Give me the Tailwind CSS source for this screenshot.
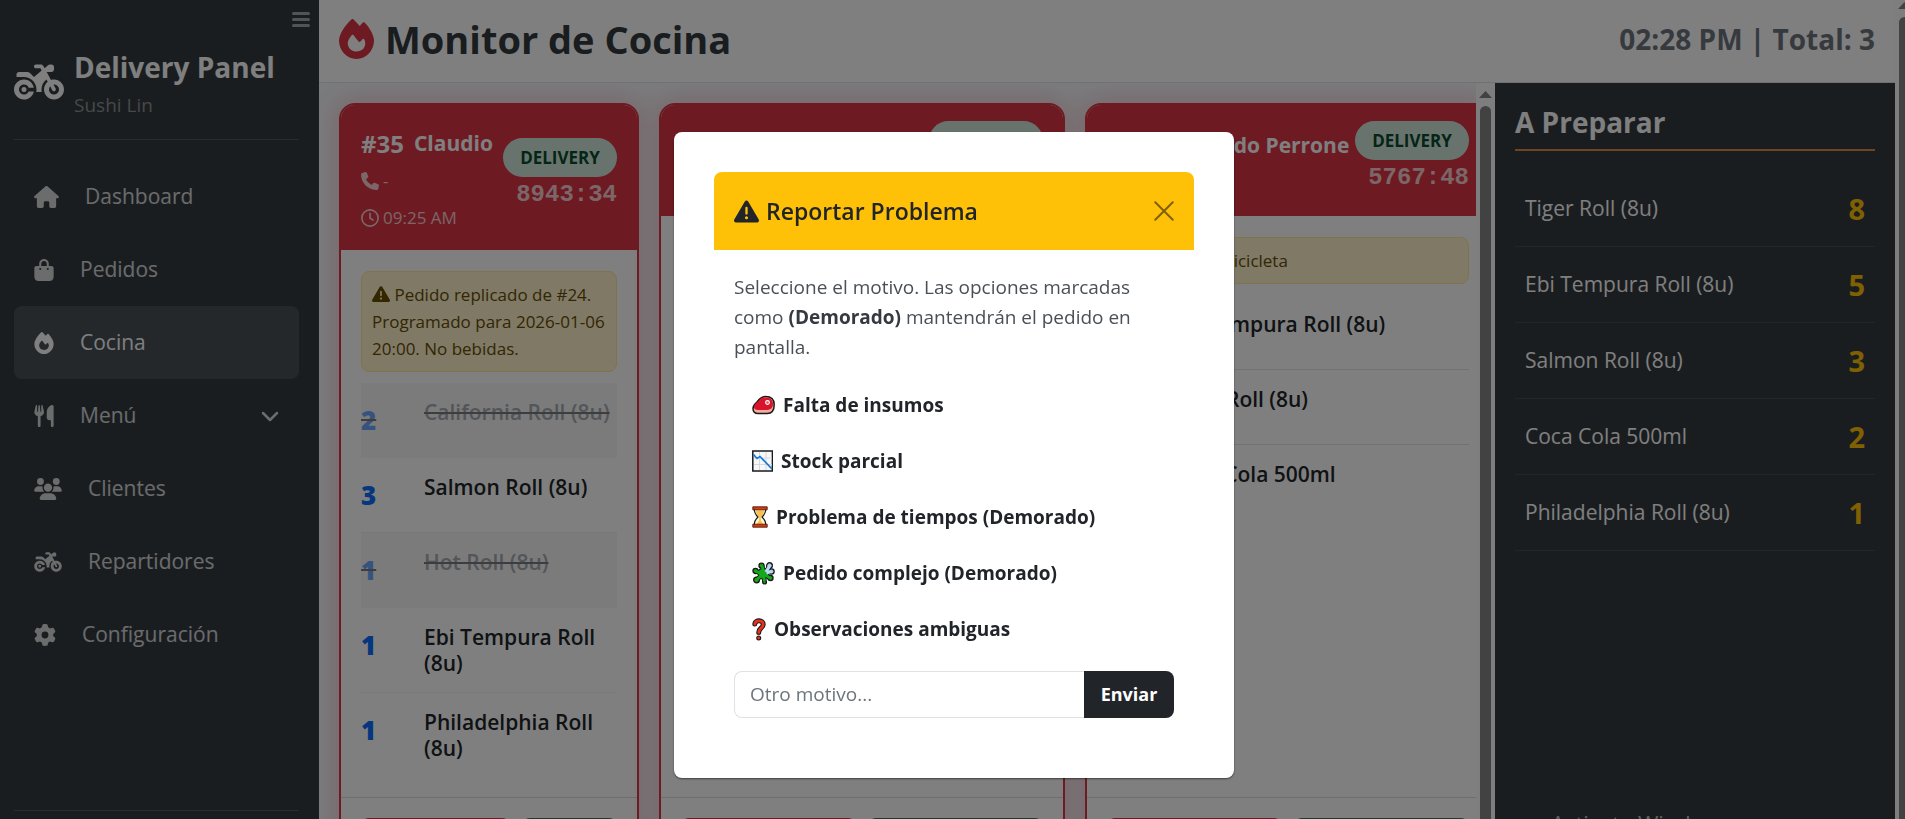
<!DOCTYPE html>
<html lang="es">
<head>
  <meta charset="UTF-8">
  <meta name="viewport" content="width=device-width, initial-scale=1.0">
  <title>Monitor de Cocina</title>
  <script src="https://cdn.jsdelivr.net/npm/@tailwindcss/browser@4"></script>
</head>
<body class="h-screen overflow-hidden bg-[#f5f6fa] font-['Open_Sans',sans-serif] text-[#212529]">

  <!-- Iconos compartidos -->
  <svg class="hidden">
    <symbol id="i-fire" viewBox="0 0 448 512"><path d="M159.3 5.4c7.8-7.3 19.9-7.2 27.7 .1c27.6 25.9 53.5 53.8 77.7 84c11-14.4 23.5-30.1 37-42.9c7.9-7.4 20.1-7.4 28 .1c34.6 33 63.9 76.6 84.5 118c20.3 40.8 33.8 82.5 33.8 111.9C448 404.2 348.2 512 224 512C98.4 512 0 404.1 0 276.5c0-38.4 17.8-85.3 45.4-131.7C73.3 97.7 112.7 48.6 159.3 5.4zM225.7 416c25.3 0 47.7-7 68.8-21c42.1-29.4 53.4-88.2 28.1-134.4c-4.5-9-16-9.6-22.5-2l-25.2 29.3c-6.6 7.6-18.5 7.4-24.7-.5c-16.5-21-46-58.5-62.8-79.8c-6.3-8-18.3-8.1-24.7-.1c-33.8 42.5-50.8 69.3-50.8 99.4C112 375.4 162.6 416 225.7 416z"/></symbol>
    <symbol id="i-moto" viewBox="0 0 640 512"><path d="M280 32c-13.3 0-24 10.7-24 24s10.7 24 24 24h57.7l16.4 30.3L256 192l-45.3-45.3c-12-12-28.3-18.7-45.3-18.7H64c-17.7 0-32 14.3-32 32v32h96c88.4 0 160 71.6 160 160c0 11-1.1 21.7-3.2 32h70.4c-2.1-10.3-3.2-21-3.2-32c0-52.2 25-98.6 63.7-127.8l15.4 28.6C402.4 276.3 384 312 384 352c0 70.7 57.3 128 128 128s128-57.3 128-128s-57.3-128-128-128c-13.5 0-26.5 2.1-38.7 6L418.2 128H480c17.7 0 32-14.3 32-32V64c0-17.7-14.3-32-32-32H459.6c-7.5 0-14.7 2.6-20.5 7.4L391.7 78.9l-14-26c-7-12.9-20.5-21-35.2-21H280zM462.7 311.2l28.2 52.2c6.3 11.7 20.9 16 32.5 9.7s16-20.9 9.7-32.5l-28.2-52.2c2.3-.3 4.7-.4 7.1-.4c35.3 0 64 28.7 64 64s-28.7 64-64 64s-64-28.7-64-64c0-15.5 5.5-29.7 14.7-40.8zM187.3 376c-9.5 23.5-32.5 40-59.3 40c-35.3 0-64-28.7-64-64s28.7-64 64-64c26.9 0 49.9 16.5 59.3 40h66.4C242.5 268.8 190.5 224 128 224C57.3 224 0 281.3 0 352s57.3 128 128 128c62.5 0 114.5-44.8 125.8-104H187.3zM128 384a32 32 0 1 0 0-64 32 32 0 1 0 0 64z"/></symbol>
    <symbol id="i-phone" viewBox="0 0 512 512"><path d="M164.9 24.6c-7.7-18.6-28-28.5-47.4-23.2l-88 24C12.1 30.2 0 46 0 64C0 311.4 200.6 512 448 512c18 0 33.8-12.1 38.6-29.5l24-88c5.3-19.4-4.6-39.7-23.2-47.4l-96-40c-16.3-6.8-35.2-2.1-46.3 11.6L304.7 368C234.3 334.7 177.3 277.7 144 207.3L193.3 167c13.7-11.2 18.4-30 11.6-46.3l-40-96z"/></symbol>
    <symbol id="i-clock" viewBox="0 0 512 512"><g fill="none" stroke="currentColor" stroke-width="48" stroke-linecap="round" stroke-linejoin="round"><circle cx="256" cy="256" r="232"/><path d="M256 120v136l88 60"/></g></symbol>
    <symbol id="i-warn" viewBox="0 0 512 512"><path d="M256 32c14.2 0 27.3 7.5 34.5 19.8l216 368c7.3 12.4 7.3 27.7 .2 40.1S486.3 480 472 480H40c-14.3 0-27.6-7.7-34.7-20.1s-7-27.8 .2-40.1l216-368C228.7 39.5 241.8 32 256 32zm0 128c-13.3 0-24 10.7-24 24V296c0 13.3 10.7 24 24 24s24-10.7 24-24V184c0-13.3-10.7-24-24-24zm32 224a32 32 0 1 0 -64 0 32 32 0 1 0 64 0z"/></symbol>
  </svg>

  <div class="flex h-full">

    <!-- Sidebar -->
    <aside class="relative flex w-[319px] shrink-0 flex-col bg-[#343a40] pr-5 pl-[14px] text-white">
      <button type="button" aria-label="Contraer menú" class="absolute top-[10px] right-2 text-white/55">
        <svg class="h-5 w-5" viewBox="0 0 20 20" fill="none" stroke="currentColor" stroke-width="3" stroke-linecap="round"><path d="M2.5 3.5h15M2.5 9.5h15M2.5 15.5h15"/></svg>
      </button>

      <div class="flex h-[139px] shrink-0 items-center gap-[10px] pt-[24px]">
        <svg class="h-10 w-[50px] shrink-0 fill-current"><use href="#i-moto"/></svg>
        <div class="pt-[6px]">
          <div class="text-[28px] leading-[40px] font-bold whitespace-nowrap">Delivery Panel</div>
          <div class="text-[19px] leading-[36px] text-white/45">Sushi Lin</div>
        </div>
      </div>
      <hr class="border-[#545b61]">

      <nav class="mt-5 flex flex-1 flex-col text-[21px] text-white/80">
        <a href="#" class="flex h-[73px] items-center gap-[26px] rounded-lg px-5">
          <svg class="h-[22px] w-[25px] fill-current" viewBox="0 0 576 512"><path d="M575.8 255.5c0 18-15 32.1-32 32.1h-32l.7 160.2c0 2.7-.2 5.4-.5 8.1V472c0 22.1-17.9 40-40 40H456c-1.1 0-2.2 0-3.3-.1c-1.4 .1-2.8 .1-4.2 .1H416 392c-22.1 0-40-17.9-40-40V448 384c0-17.7-14.3-32-32-32H256c-17.7 0-32 14.3-32 32v64 24c0 22.1-17.9 40-40 40H160 128.1c-1.5 0-3-.1-4.5-.2c-1.2 .1-2.4 .2-3.6 .2H104c-22.1 0-40-17.9-40-40V360c0-.9 0-1.9 .1-2.8V287.6H32c-18 0-32-14-32-32.1c0-9 3-17 10-24L266.4 8c7-7 15-8 22-8s15 2 21 7L564.8 231.5c8 7 12 15 11 24z"/></svg>
          Dashboard
        </a>
        <a href="#" class="flex h-[73px] items-center gap-[26px] rounded-lg px-5">
          <svg class="h-[22px] w-5 fill-current" viewBox="0 0 448 512"><path d="M160 112c0-35.3 28.7-64 64-64s64 28.7 64 64v48H160V112zm-48 48H48c-26.5 0-48 21.5-48 48V416c0 53 43 96 96 96H352c53 0 96-43 96-96V208c0-26.5-21.5-48-48-48H336V112C336 50.1 285.9 0 224 0S112 50.1 112 112v48zm24 48a24 24 0 1 1 0 48 24 24 0 1 1 0-48zm152 24a24 24 0 1 1 48 0 24 24 0 1 1 -48 0z"/></svg>
          Pedidos
        </a>
        <a href="#" class="flex h-[73px] items-center gap-[26px] rounded-lg bg-[#495057] px-5 text-white">
          <svg class="h-[22px] w-5 fill-current"><use href="#i-fire"/></svg>
          Cocina
        </a>
        <a href="#" class="flex h-[73px] items-center gap-[26px] rounded-lg px-5">
          <svg class="h-[22px] w-5 fill-current" viewBox="0 0 448 512"><path d="M416 0C400 0 288 32 288 176V288c0 35.3 28.7 64 64 64h32V480c0 17.7 14.3 32 32 32s32-14.3 32-32V352 240 32c0-17.7-14.3-32-32-32zM64 16C64 7.8 57.9 1 49.7 .1S34.2 4.6 32.4 12.5L2.1 148.8C.7 155.1 0 161.5 0 167.9c0 45.9 35.1 83.6 80 87.7V480c0 17.7 14.3 32 32 32s32-14.3 32-32V255.6c44.9-4.1 80-41.8 80-87.7c0-6.4-.7-12.8-2.1-19.1L191.6 12.5c-1.8-8-9.3-13.3-17.4-12.4S160 7.8 160 16V150.2c0 5.4-4.4 9.8-9.8 9.8c-5.1 0-9.3-3.9-9.8-9L127.9 14.6C127.2 6.3 120.3 0 112 0s-15.2 6.3-15.9 14.6L83.7 151c-.5 5.1-4.7 9-9.8 9c-5.4 0-9.8-4.4-9.8-9.8V16z"/></svg>
          Menú
          <svg class="ml-auto h-[18px] w-[18px]" viewBox="0 0 18 18" fill="none" stroke="currentColor" stroke-width="2.5" stroke-linecap="round" stroke-linejoin="round"><path d="M2 6l7 7 7-7"/></svg>
        </a>
        <a href="#" class="flex h-[73px] items-center gap-[26px] rounded-lg px-5">
          <svg class="h-[22px] w-7 fill-current" viewBox="0 0 640 512"><path d="M144 0a80 80 0 1 1 0 160A80 80 0 1 1 144 0zM512 0a80 80 0 1 1 0 160A80 80 0 1 1 512 0zM0 298.7C0 239.8 47.8 192 106.7 192h42.7c15.9 0 31 3.5 44.6 9.7c-1.3 7.2-1.9 14.7-1.9 22.3c0 38.2 16.8 72.5 43.3 96c-.2 0-.4 0-.7 0H21.3C9.6 320 0 310.4 0 298.7zM405.3 320c-.2 0-.4 0-.7 0c26.6-23.5 43.3-57.8 43.3-96c0-7.6-.7-15-1.9-22.3c13.6-6.3 28.7-9.7 44.6-9.7h42.7C592.2 192 640 239.8 640 298.7c0 11.8-9.6 21.3-21.3 21.3H405.3zM224 224a96 96 0 1 1 192 0 96 96 0 1 1 -192 0zM128 485.3C128 411.7 187.7 352 261.3 352H378.7C452.3 352 512 411.7 512 485.3c0 14.7-11.9 26.7-26.7 26.7H154.7c-14.7 0-26.7-11.9-26.7-26.7z"/></svg>
          Clientes
        </a>
        <a href="#" class="flex h-[73px] items-center gap-[26px] rounded-lg px-5">
          <svg class="h-[22px] w-7 fill-current"><use href="#i-moto"/></svg>
          Repartidores
        </a>
        <a href="#" class="flex h-[73px] items-center gap-[26px] rounded-lg px-5">
          <svg class="h-[22px] w-[22px] fill-current" viewBox="0 0 512 512"><path d="M495.9 166.6c3.2 8.7 .5 18.4-6.4 24.6l-43.3 39.4c1.1 8.3 1.7 16.8 1.7 25.4s-.6 17.1-1.7 25.4l43.3 39.4c6.9 6.2 9.6 15.9 6.4 24.6c-4.4 11.9-9.7 23.3-15.8 34.3l-4.7 8.1c-6.6 11-14 21.4-22.1 31.2c-5.9 7.2-15.7 9.6-24.5 6.8l-55.7-17.7c-13.4 10.3-28.2 18.9-44 25.4l-12.5 57.1c-2 9.1-9 16.3-18.2 17.8c-13.8 2.3-28 3.5-42.5 3.5s-28.7-1.2-42.5-3.5c-9.2-1.5-16.2-8.7-18.2-17.8l-12.5-57.1c-15.8-6.5-30.6-15.1-44-25.4L83.1 425.9c-8.8 2.8-18.6 .3-24.5-6.8c-8.1-9.8-15.5-20.2-22.1-31.2l-4.7-8.1c-6.1-11-11.4-22.4-15.8-34.3c-3.2-8.7-.5-18.4 6.4-24.6l43.3-39.4C64.6 273.1 64 264.6 64 256s.6-17.1 1.7-25.4L22.4 191.2c-6.9-6.2-9.6-15.9-6.4-24.6c4.4-11.9 9.7-23.3 15.8-34.3l4.7-8.1c6.6-11 14-21.4 22.1-31.2c5.9-7.2 15.7-9.6 24.5-6.8l55.7 17.7c13.4-10.3 28.2-18.9 44-25.4l12.5-57.1c2-9.1 9-16.3 18.2-17.8C227.3 1.2 241.5 0 256 0s28.7 1.2 42.5 3.5c9.2 1.5 16.2 8.7 18.2 17.8l12.5 57.1c15.8 6.5 30.6 15.1 44 25.4l55.7-17.7c8.8-2.8 18.6-.3 24.5 6.8c8.1 9.8 15.5 20.2 22.1 31.2l4.7 8.1c6.1 11 11.4 22.4 15.8 34.3zM256 336a80 80 0 1 0 0-160 80 80 0 1 0 0 160z"/></svg>
          Configuración
        </a>
      </nav>
      <hr class="mb-2 border-[#545b61]">
    </aside>

    <main class="flex min-w-0 flex-1 flex-col">
      <header class="flex h-[83px] shrink-0 items-center justify-between border-b border-[#dee2e6] bg-white px-5 pb-1">
        <h1 class="flex items-center gap-[11px] text-[38px] font-bold text-[#343a40]">
          <svg class="h-10 w-[35px] fill-[#dc3545]"><use href="#i-fire"/></svg>
          Monitor de Cocina
        </h1>
        <div class="text-[28px] font-bold text-[#6c757d]">02:28 PM | Total: 3</div>
      </header>

      <div class="flex min-h-0 flex-1">
        <!-- Tarjetas de pedidos -->
        <div class="flex min-w-0 flex-1 gap-5 overflow-hidden pt-5 pl-5">

          <article class="flex h-[800px] w-[300px] shrink-0 flex-col overflow-hidden rounded-2xl border-2 border-[#dc3545] bg-white shadow-[0_0_24px_4px_rgba(220,53,69,0.2)]">
            <div class="flex items-center justify-between bg-[#dc3545] px-5 py-4 text-white">
              <div>
                <div class="flex h-11 items-center gap-[10px] pt-[2px] text-[21px] font-bold"><span class="text-[24px]">#35</span> Claudio</div>
                <div class="mb-[5px] flex h-8 items-center gap-1 text-[17px] text-white/75"><svg class="h-[18px] w-[18px] fill-current"><use href="#i-phone"/></svg> -</div>
                <div class="flex h-8 items-center gap-1 text-[17px] text-white/75"><svg class="h-[18px] w-[18px]"><use href="#i-clock"/></svg> 09:25 AM</div>
              </div>
              <div class="flex flex-col items-end pb-1">
                <span class="flex h-[39px] w-[114px] items-center justify-center rounded-full bg-[#d1e7dd] text-[17px] font-bold text-[#0a4a2c]">DELIVERY</span>
                <span class="font-['Liberation_Mono',monospace] text-2xl leading-[36px] font-bold text-white/75">8943:34</span>
              </div>
            </div>
            <div class="px-5 pt-[21px]">
              <div class="mb-[11px] rounded-lg border border-[#ffe69c] bg-[#fff3cd] px-[10px] py-[9px] text-[17px] leading-[27px] text-[#664d03]">
                <svg class="inline h-[18px] w-[18px] align-[-2px] fill-current"><use href="#i-warn"/></svg> Pedido replicado de #24. Programado para 2026-01-06 20:00. No bebidas.
              </div>
              <ul class="text-[21px] leading-[26px] font-semibold">
                <li class="flex border-b border-[#f1f1f1] bg-[#f1f2f3] py-4 line-through opacity-60"><span class="w-[63px] shrink-0 text-[26px] leading-[42px] font-extrabold text-[#0d6efd]">2</span><span class="text-[#6c757d]">California Roll (8u)</span></li>
                <li class="flex border-b border-[#f1f1f1] py-4"><span class="w-[63px] shrink-0 text-[26px] leading-[42px] font-extrabold text-[#0d6efd]">3</span>Salmon Roll (8u)</li>
                <li class="flex border-b border-[#f1f1f1] bg-[#f1f2f3] py-4 line-through opacity-60"><span class="w-[63px] shrink-0 text-[26px] leading-[42px] font-extrabold text-[#0d6efd]">1</span><span class="text-[#6c757d]">Hot Roll (8u)</span></li>
                <li class="flex border-b border-[#f1f1f1] py-4"><span class="w-[63px] shrink-0 text-[26px] leading-[42px] font-extrabold text-[#0d6efd]">1</span>Ebi Tempura Roll (8u)</li>
                <li class="flex py-4"><span class="w-[63px] shrink-0 text-[26px] leading-[42px] font-extrabold text-[#0d6efd]">1</span>Philadelphia Roll (8u)</li>
              </ul>
            </div>
            <div class="mt-5 flex gap-3 border-t border-[#dcdcdc] p-5">
              <button type="button" class="h-12 w-[149px] rounded-lg bg-[#dc3545] font-bold text-white">Problema</button>
              <button type="button" class="h-12 flex-1 rounded-lg bg-[#198754] font-bold text-white">Listo</button>
            </div>
          </article>

          <article class="flex h-[800px] w-[406px] shrink-0 flex-col overflow-hidden rounded-2xl border-2 border-[#dc3545] bg-white shadow-[0_0_24px_4px_rgba(220,53,69,0.2)]">
            <div class="flex items-center justify-between bg-[#dc3545] px-5 py-4 text-white">
              <div>
                <div class="flex h-11 items-center text-[24px] font-bold">#36</div>
              </div>
              <div class="flex flex-col items-end pb-1">
                <span class="flex h-[39px] w-[114px] items-center justify-center rounded-full bg-[#d1e7dd] text-[17px] font-bold text-[#0a4a2c]">DELIVERY</span>
                <span class="h-[36px]"></span>
              </div>
            </div>
            <div class="h-[561px] shrink-0"></div>
            <div class="mt-5 flex gap-3 border-t border-[#dcdcdc] p-5">
              <button type="button" class="h-12 flex-1 rounded-lg bg-[#dc3545] font-bold text-white">Problema</button>
              <button type="button" class="h-12 flex-1 rounded-lg bg-[#198754] font-bold text-white">Listo</button>
            </div>
          </article>

          <article class="flex h-[800px] w-[406px] shrink-0 flex-col overflow-hidden rounded-2xl border-2 border-[#dc3545] bg-white shadow-[0_0_24px_4px_rgba(220,53,69,0.2)]">
            <div class="flex items-center justify-between bg-[#dc3545] px-5 py-4 text-white">
              <div>
                <div class="flex h-11 items-center gap-[10px] pt-[2px] text-[21px] font-bold whitespace-nowrap"><span class="text-[24px]">#37</span> Fernando Perrone</div>
                <div class="flex h-8 items-center gap-1 text-[17px] text-white/75"><svg class="h-[18px] w-[18px]"><use href="#i-clock"/></svg> 02:20 PM</div>
              </div>
              <div class="flex flex-col items-end pb-1">
                <span class="flex h-[39px] w-[114px] items-center justify-center rounded-full bg-[#d1e7dd] text-[17px] font-bold text-[#0a4a2c]">DELIVERY</span>
                <span class="font-['Liberation_Mono',monospace] text-2xl leading-[36px] font-bold text-white/75">5767:48</span>
              </div>
            </div>
            <div class="h-[561px] shrink-0 px-5 pt-[21px]">
              <div class="mb-[11px] rounded-lg border border-[#ffe69c] bg-[#fff3cd] px-[10px] py-[9px] text-[17px] leading-[27px] text-[#664d03]">
                <svg class="inline h-[18px] w-[18px] align-[-2px] fill-current"><use href="#i-warn"/></svg> Buscar en bicicleta
              </div>
              <ul class="text-[21px] leading-[26px] font-semibold">
                <li class="flex border-b border-[#e4e4e4] py-4"><span class="w-[63px] shrink-0 text-[26px] leading-[42px] font-extrabold text-[#0d6efd]">4</span>Ebi Tempura Roll (8u)</li>
                <li class="flex border-b border-[#e4e4e4] py-4"><span class="w-[63px] shrink-0 text-[26px] leading-[42px] font-extrabold text-[#0d6efd]">8</span>Tiger Roll (8u)</li>
                <li class="flex py-4"><span class="w-[63px] shrink-0 text-[26px] leading-[42px] font-extrabold text-[#0d6efd]">2</span>Coca Cola 500ml</li>
              </ul>
            </div>
            <div class="mt-5 flex gap-3 border-t border-[#dcdcdc] p-5">
              <button type="button" class="h-12 flex-1 rounded-lg bg-[#dc3545] font-bold text-white">Problema</button>
              <button type="button" class="h-12 flex-1 rounded-lg bg-[#198754] font-bold text-white">Listo</button>
            </div>
          </article>
        </div>

        <!-- Barra de scroll de las tarjetas -->
        <div class="flex w-[19px] shrink-0 flex-col items-center gap-2 bg-[#fcfcfc] pt-2">
          <svg class="h-[7px] w-[13px] shrink-0 fill-[#858585]" viewBox="0 0 13 7"><path d="M0 7L6.5 0 13 7z"/></svg>
          <div class="w-[11px] flex-1 rounded-t-full bg-[#858585]"></div>
        </div>

        <!-- Totales -->
        <aside class="relative w-[400px] shrink-0 overflow-hidden bg-[#343a40] p-5 text-white">
          <h2 class="border-b-2 border-[#dd8a3c] pb-2 text-[28px] leading-[38px] font-bold">A Preparar</h2>
          <ul class="mt-5 text-[21px]">
            <li class="flex h-[76px] items-center justify-between border-b border-[#454c52] px-[10px]">Tiger Roll (8u) <b class="text-[29px] text-[#ffc107]">8</b></li>
            <li class="flex h-[76px] items-center justify-between border-b border-[#454c52] px-[10px]">Ebi Tempura Roll (8u) <b class="text-[29px] text-[#ffc107]">5</b></li>
            <li class="flex h-[76px] items-center justify-between border-b border-[#454c52] px-[10px]">Salmon Roll (8u) <b class="text-[29px] text-[#ffc107]">3</b></li>
            <li class="flex h-[76px] items-center justify-between border-b border-[#454c52] px-[10px]">Coca Cola 500ml <b class="text-[29px] text-[#ffc107]">2</b></li>
            <li class="flex h-[76px] items-center justify-between border-b border-[#454c52] px-[10px]">Philadelphia Roll (8u) <b class="text-[29px] text-[#ffc107]">1</b></li>
          </ul>
          <div class="absolute -bottom-[22px] left-[56px] text-[22px] leading-[36px] text-white/70">Activate Windows</div>
        </aside>
      </div>
    </main>

    <!-- Barra de scroll de la página -->
    <div class="w-[10px] shrink-0 overflow-hidden bg-[#fcfcfc] pt-[2px] pl-1">
      <svg class="-ml-px h-[7px] w-[13px] max-w-none fill-[#858585]" viewBox="0 0 13 7"><path d="M0 7L6.5 0 13 7z"/></svg>
      <div class="mt-2 h-full w-[11px] rounded-t-full bg-[#858585]"></div>
    </div>
  </div>

  <!-- Modal -->
  <div class="fixed inset-0 flex items-start justify-center bg-black/50 pt-[132px] pl-[3px]">
    <div role="dialog" aria-labelledby="modal-title" class="w-[560px] rounded-lg bg-white p-10 shadow-[0_1px_2px_rgba(0,0,0,0.5)]">
      <div class="flex h-[78px] items-center justify-between rounded-t-lg bg-[#ffc107] px-5">
        <h5 id="modal-title" class="flex items-center gap-[7px] text-[23px] font-semibold">
          <svg class="h-[25px] w-[25px] fill-current"><use href="#i-warn"/></svg>
          Reportar Problema
        </h5>
        <button type="button" aria-label="Cerrar" class="opacity-50">
          <svg class="h-5 w-5" viewBox="0 0 16 16" fill="none" stroke="#000" stroke-width="1.6" stroke-linecap="round"><path d="M1 1l14 14M15 1L1 15"/></svg>
        </button>
      </div>
      <div class="px-5 pt-[22px] pb-5">
        <p class="mb-[15px] text-[19px] leading-[30px] text-[#495057]">Seleccione el motivo. Las opciones marcadas como <b class="text-[#343a40]">(Demorado)</b> mantendrán el pedido en pantalla.</p>
        <div class="mb-[14px] flex flex-col text-[19px] font-bold">
          <button type="button" class="flex h-14 items-center gap-2 px-[18px] text-left">
            <svg class="h-[22px] w-[23px]" viewBox="0 0 23 22"><path d="M1 14.500c0-3 1.500-4.500 4-6.500C7 5.500 8.500 2.500 13.500 2.500c6 0 8.700 3.500 8.700 8s-1.700 9-7 9H6c-3.500 0-5-2-5-5z" fill="#f4aca0" stroke="#1a1a1a" stroke-width="1.5"/><path d="M2 13c.2-2.500 2-3.500 4-5.500C8 5 9 3.500 13.500 3.500c5 0 7.500 2.800 7.500 6.500 0 4.500-3 6-7.500 6H6c-2.500 0-4-.8-4-3z" fill="#d8132b"/><circle cx="15.500" cy="8.500" r="1.900" fill="#e8485a" stroke="#fff" stroke-width="1.1"/></svg>
            Falta de insumos
          </button>
          <button type="button" class="flex h-14 items-center gap-2 px-[18px] text-left">
            <svg class="h-[22px] w-[21px]" viewBox="0 0 21 22"><rect x=".8" y="1" width="19.6" height="20" fill="#f5f7f9" stroke="#1a1a1a" stroke-width="1.5"/><path d="M7.5 2v18M14 2v18M2 8h18M2 14.500h18" stroke="#d5d8dc"/><path d="M1.500 4.500L5 8.500l3-2L20 19" fill="none" stroke="#1678d3" stroke-width="1.7"/></svg>
            Stock parcial
          </button>
          <button type="button" class="flex h-14 items-center gap-2 px-[18px] text-left">
            <svg class="h-[22px] w-4" viewBox="0 0 16 22"><path d="M2.200 2.500c0 4.500 1 6 3.800 8.500-2.800 2.500-3.800 4-3.800 8.500h11.600c0-4.500-1-6-3.800-8.500 2.800-2.500 3.800-4 3.800-8.500z" fill="#fff3d6" stroke="#1a1a1a" stroke-width="1.2"/><path d="M4 4.500h8c0 3-1.500 4.700-3.200 6.500v3.500l2.700 4h-7l2.700-4V11C5.500 9 4 7.500 4 4.500z" fill="#fcc04a"/><path d="M.8 .8h14.400v3H.8zM.8 18.200h14.400v3H.8z" fill="#d83b12" stroke="#3a1206" stroke-width=".8"/></svg>
            Problema de tiempos (Demorado)
          </button>
          <button type="button" class="flex h-14 items-center gap-2 px-[18px] text-left">
            <svg class="h-[23px] w-[23px]" viewBox="0 0 23 23">
              <g fill="#1a1a1a" stroke="#1a1a1a" stroke-width="2.6" stroke-linejoin="round"><path d="M8 8l6 0 1.500 6-6 2-2.500-4z"/><circle cx="3.500" cy="9" r="1.900"/><circle cx="9.500" cy="3.600" r="1.900"/><circle cx="17.500" cy="3.600" r="2.200"/><circle cx="19.500" cy="9.500" r="2"/><circle cx="18.500" cy="16" r="1.900"/><circle cx="12.500" cy="20" r="1.300"/><circle cx="4.500" cy="18" r="2.200"/></g>
              <path d="M4 9l5 3M10 4l2 7M17.500 4l-4.500 7M19 9.500l-6 2M18 16l-6-4M12.500 19l-1-6M5 17.500l6-5.500" stroke="#1a1a1a" stroke-width="4.6"/>
              <g fill="#16a81c" stroke="#16a81c"><path d="M8 8l6 0 1.500 6-6 2-2.500-4z"/><circle cx="3.500" cy="9" r="1.400"/><circle cx="9.500" cy="3.600" r="1.400"/><circle cx="18.500" cy="16" r="1.400"/><circle cx="12.500" cy="20" r=".8"/><circle cx="4.500" cy="18" r="1.700"/><path d="M4 9l5 3M10 4l2 7M18 16l-6-4M12.500 19l-1-6M5 17.500l6-5.500" stroke-width="2.8"/></g>
              <g fill="#b9dcf5" stroke="#b9dcf5"><circle cx="17.500" cy="3.600" r="1.700"/><circle cx="19.500" cy="9.500" r="1.500"/><path d="M17.500 4l-3.500 6M19 9.500l-4.500 1.500" stroke-width="3.2"/></g>
            </svg>
            Pedido complejo (Demorado)
          </button>
          <button type="button" class="flex h-14 items-center gap-2 px-[18px] text-left">
            <svg class="h-[23px] w-[14px]" viewBox="0 0 14 23" fill="none" stroke-linecap="round" stroke-linejoin="round"><path d="M2.800 6C3.200 1.800 11.200 1.600 11.200 6.500c0 3.500-4.500 3.500-4.500 8M6.700 20h.01" stroke="#1a1a1a" stroke-width="5"/><path d="M2.800 6C3.200 1.800 11.200 1.600 11.200 6.500c0 3.500-4.500 3.500-4.500 8M6.700 20h.01" stroke="#e8321e" stroke-width="2.8"/></svg>
            Observaciones ambiguas
          </button>
        </div>
        <form class="flex h-[47px]">
          <input type="text" aria-label="Otro motivo" placeholder="Otro motivo..." class="min-w-0 flex-1 rounded-l-lg border border-r-0 border-[#dee2e6] px-[15px] text-[19px] placeholder:text-[#6c757d]">
          <button type="button" class="w-[90px] rounded-r-lg bg-[#212529] text-[18px] font-bold text-white">Enviar</button>
        </form>
      </div>
    </div>
  </div>

</body>
</html>
